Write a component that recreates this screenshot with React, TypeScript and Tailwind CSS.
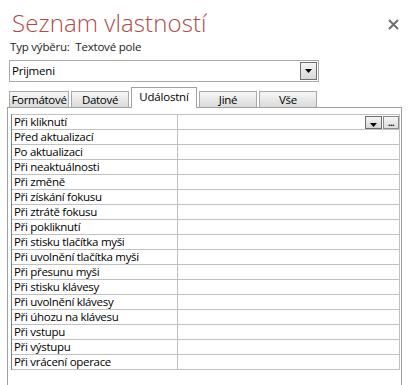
import React from 'react';

const events = [
  'Při kliknutí',
  'Před aktualizací',
  'Po aktualizaci',
  'Při neaktuálnosti',
  'Při změně',
  'Při získání fokusu',
  'Při ztrátě fokusu',
  'Při pokliknutí',
  'Při stisku tlačítka myši',
  'Při uvolnění tlačítka myši',
  'Při přesunu myši',
  'Při stisku klávesy',
  'Při uvolnění klávesy',
  'Při úhozu na klávesu',
  'Při vstupu',
  'Při výstupu',
  'Při vrácení operace',
];

const tabs = [
  { label: 'Formátové', w: 'w-[60px]' },
  { label: 'Datové', w: 'w-[58px]' },
  { label: 'Událostní', w: 'w-[66px]', active: true },
  { label: 'Jiné', w: 'w-[58px]' },
  { label: 'Vše', w: 'w-[58px]' },
];

const DownArrow = () => (
  <svg width="7" height="4" viewBox="0 0 7 4">
    <path d="M0 0h7L3.5 4z" fill="#000" />
  </svg>
);

export default function App() {
  return (
    <div className="relative w-[412px] h-[385px] overflow-hidden bg-white text-black font-['Open_Sans','Noto_Sans',sans-serif]">
      {/* Header */}
      <div className="flex justify-between items-start pl-[12px] pr-[12px] pt-[7px]">
        <h1 className="text-[24px] leading-[32px] font-light text-[#b04a45] tracking-[0.1px]">
          Seznam vlastností
        </h1>
        <button className="mt-[12px] mr-[1px]">
          <svg width="11" height="11" viewBox="0 0 11 11">
            <path d="M1 1l9 9M10 1l-9 9" stroke="#6f6f6f" strokeWidth="2" />
          </svg>
        </button>
      </div>

      <div className="pl-[10px] text-[11.5px] leading-[15px] tracking-[-0.2px] text-[#222]">
        Typ výběru:&nbsp;&nbsp;Textové pole
      </div>

      {/* Combo */}
      <div className="ml-[9px] mt-[6px] w-[310px] h-[22px] border border-[#a9a9a9] flex items-center justify-between pl-[2px] pr-[1px]">
        <span className="text-[11.5px] leading-[14px] tracking-[-0.2px]">Prijmeni</span>
        <div className="w-[17px] h-[18px] border border-[#707070] bg-gradient-to-b from-[#f4f4f4] to-[#d8d8d8] flex items-center justify-center">
          <DownArrow />
        </div>
      </div>

      {/* Tabs */}
      <div className="flex items-end ml-[9px] mt-[5px] h-[20px] gap-[2px]">
        {tabs.map((t) =>
          t.active ? (
            <div
              key={t.label}
              className={`${t.w} h-[21px] -mb-[1px] relative z-10 bg-white border border-[#a0a0a0] border-b-0 flex items-start justify-center pt-[1px] text-[11.5px] leading-[16px] tracking-[-0.2px]`}
            >
              {t.label}
            </div>
          ) : (
            <div
              key={t.label}
              className={`${t.w} h-[16px] bg-gradient-to-b from-[#f6f6f6] to-[#dadada] border border-[#a8a8a8] border-b-0 flex items-center justify-center text-[11.5px] leading-[14px] tracking-[-0.3px] whitespace-nowrap`}
            >
              {t.label}
            </div>
          )
        )}
      </div>

      {/* Panel */}
      <div className="ml-[7px] w-[395px] h-[280px] border border-b-0 border-[#a0a0a0] pt-[6px] pl-[3px] pr-[1px]">
        <div className="border-t border-r border-[#c0c0c0] border-l border-l-[#7d7d7d]">
          {events.map((e, i) => (
            <div key={e} className="flex h-[15px] border-b border-[#c0c0c0]">
              <div className="w-[166px] border-r border-[#c0c0c0] pl-[2px] text-[11.5px] leading-[14px] tracking-[-0.3px] whitespace-nowrap overflow-hidden">
                {e}
              </div>
              <div className="flex-1 flex items-center justify-end gap-[1px]">
                {i === 0 && (
                  <>
                    <div className="w-[17px] h-[13px] border border-[#6e6e6e] bg-gradient-to-b from-[#f6f6f6] to-[#d6d6d6] flex items-end justify-center pb-[1px]">
                      <DownArrow />
                    </div>
                    <div className="w-[16px] h-[13px] border border-[#8a8a8a] bg-gradient-to-b from-[#f6f6f6] to-[#dcdcdc] flex items-center justify-center text-[9px] leading-[9px] font-bold tracking-[-0.5px]">
                      ...
                    </div>
                  </>
                )}
              </div>
            </div>
          ))}
        </div>
      </div>
    </div>
  );
}
